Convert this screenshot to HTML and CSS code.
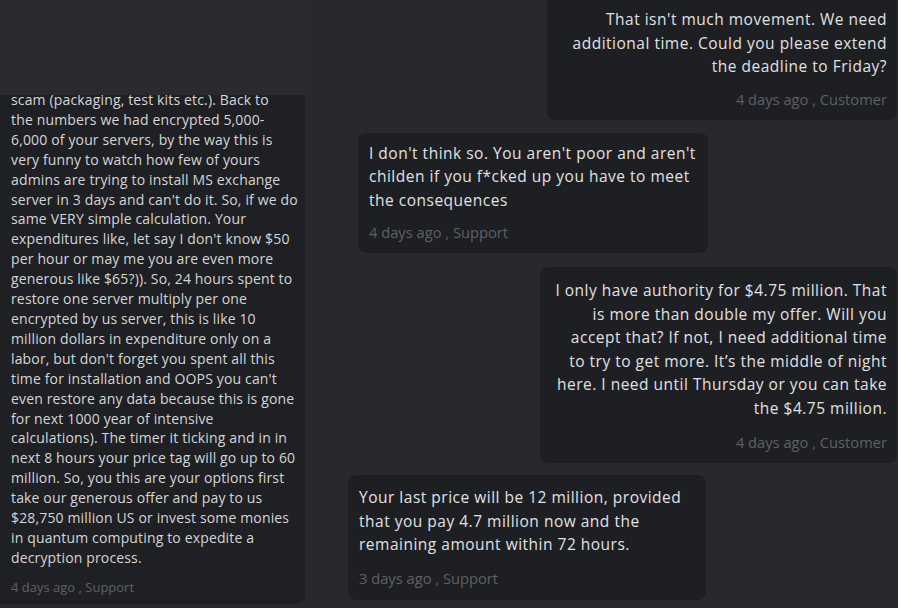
FILE: index.html
```html
<!DOCTYPE html>
<html lang="en">
<head>
<meta charset="utf-8">
<title>Chat</title>
<link rel="stylesheet" href="styles.css">
</head>
<body>
<div class="page">
  <div class="left-col">
    <div class="top-strip"></div>
    <div class="long-card">
      <p class="long-text">scam (packaging, test kits etc.). Back to<br>the numbers we had encrypted 5,000-<br>6,000 of your servers, by the way this is<br>very funny to watch how few of yours<br>admins are trying to install MS exchange<br>server in 3 days and can't do it. So, if we do<br>same VERY simple calculation. Your<br>expenditures like, let say I don't know $50<br>per hour or may me you are even more<br>generous like $65?)). So, 24 hours spent to<br>restore one server multiply per one<br>encrypted by us server, this is like 10<br>million dollars in expenditure only on a<br>labor, but don't forget you spent all this<br>time for installation and OOPS you can't<br>even restore any data because this is gone<br>for next 1000 year of intensive<br>calculations). The timer it ticking and in in<br>next 8 hours your price tag will go up to 60<br>million. So, you this are your options first<br>take our generous offer and pay to us<br>$28,750 million US or invest some monies<br>in quantum computing to expedite a<br>decryption process.</p>
      <div class="long-meta">4 days ago , Support</div>
    </div>
  </div>
  <div class="right-col">
    <div class="bubble bubble-customer b1">
      <p class="msg">That isn't much movement. We need<br>additional time. Could you please extend<br>the deadline to Friday?</p>
      <div class="meta">4 days ago , Customer</div>
    </div>
    <div class="bubble bubble-support b2">
      <p class="msg">I don't think so. You aren't poor and aren't<br>childen if you f*cked up you have to meet<br>the consequences</p>
      <div class="meta">4 days ago , Support</div>
    </div>
    <div class="bubble bubble-customer b3">
      <p class="msg">I only have authority for $4.75 million. That<br>is more than double my offer. Will you<br>accept that? If not, I need additional time<br>to try to get more. It’s the middle of night<br>here. I need until Thursday or you can take<br>the $4.75 million.</p>
      <div class="meta">4 days ago , Customer</div>
    </div>
    <div class="bubble bubble-support b4">
      <p class="msg">Your last price will be 12 million, provided<br>that you pay 4.7 million now and the<br>remaining amount within 72 hours.</p>
      <div class="meta">3 days ago , Support</div>
    </div>
  </div>
</div>
</body>
</html>
```

FILE: styles.css
```css
* { box-sizing: border-box; }
html, body {
  margin: 0;
  padding: 0;
  width: 898px;
  height: 608px;
  overflow: hidden;
  background: #27292d;
  font-family: "Open Sans", "DejaVu Sans", sans-serif;
}
.page {
  display: grid;
  grid-template-columns: 305px 1fr;
  height: 608px;
}
.left-col {
  display: flex;
  flex-direction: column;
}
.top-strip {
  height: 95px;
  background: #292b2f;
}
.long-card {
  height: 509px;
  background: #1f2023;
  border-radius: 0 0 8px 0;
  overflow: hidden;
  padding: 0 0 0 11px;
}
.long-text {
  margin: -5px 0 0 0;
  font-size: 14px;
  letter-spacing: 0.15px;
  line-height: 19.9px;
  color: #d4d5d7;
  white-space: nowrap;
}
.long-meta {
  margin-top: 10px;
  font-size: 13px;
  line-height: 18px;
  color: #5d6066;
}
.right-col {
  display: flex;
  flex-direction: column;
}
.bubble {
  background: #1e1f22;
  border-radius: 8px;
  padding: 11px 11px 11px 11px;
}
.msg {
  margin: 0;
  font-size: 15.5px;
  letter-spacing: 0.5px;
  line-height: 23.5px;
  color: #e0e1e3;
  white-space: nowrap;
}
.meta {
  margin-top: 11px;
  font-size: 14.7px;
  line-height: 20px;
  color: #5d6066;
}
.bubble-customer { text-align: right; padding-right: 10px; }
.bubble-support { text-align: left; }
.b1 {
  margin-left: 242px;
  width: 350px;
  border-radius: 0 0 8px 8px;
  padding-top: 8px;
}
.b1 .meta { margin-top: 10px; }
.b2 {
  margin-top: 13px;
  margin-left: 53px;
  width: 350px;
  padding-top: 9px;
}
.b2 .meta { margin-top: 10px; }
.b3 {
  margin-top: 14px;
  margin-left: 235px;
  width: 357px;
  padding-top: 12px;
}
.b3 .meta { margin-top: 12px; }
.b4 {
  margin-top: 12px;
  margin-left: 43px;
  width: 358px;
  padding-bottom: 12px;
}
```
